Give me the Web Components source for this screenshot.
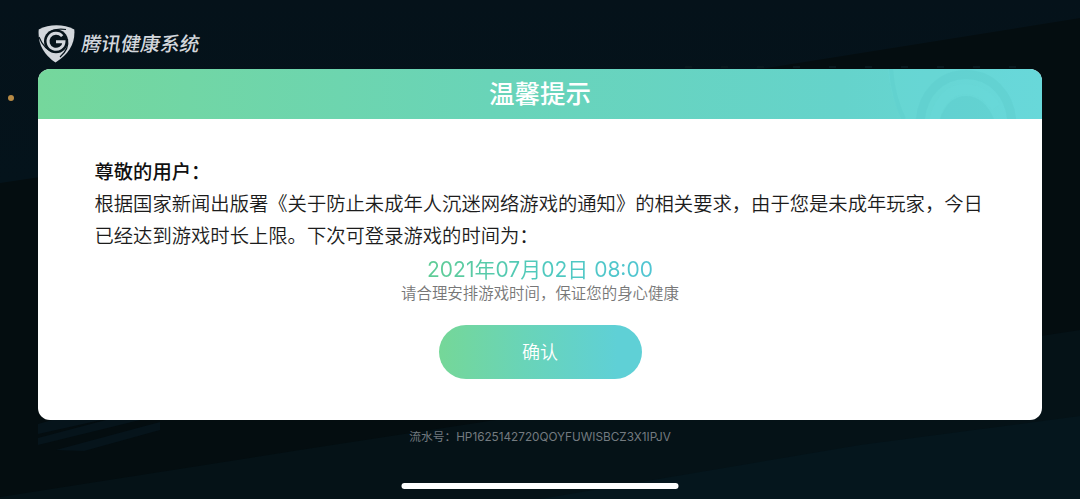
<!DOCTYPE html>
<html lang="zh-CN">
<head>
  <meta charset="UTF-8">
  <title>腾讯健康系统</title>
  <style>
    body {
      margin: 0;
      background: #040e12;
      font-family: "Inter", "Noto Sans CJK SC", sans-serif;
    }
  </style>
</head>
<body>

  <health-screen>
    <brand-logo slot="top">腾讯健康系统</brand-logo>

    <notice-card>
      <span slot="title">温馨提示</span>
      <notice-message>
        <span slot="greeting">尊敬的用户：</span>
        <span slot="line1">根据国家新闻出版署《关于防止未成年人沉迷网络游戏的通知》的相关要求，由于您是未成年玩家，今日</span>
        <span slot="line2">已经达到游戏时长上限。下次可登录游戏的时间为：</span>
      </notice-message>
      <next-login>
        <span slot="date">2021年07月02日 08:00</span>
        <span slot="tip">请合理安排游戏时间，保证您的身心健康</span>
      </next-login>
      <confirm-button>确认</confirm-button>
    </notice-card>

    <serial-number slot="bottom" code="HP1625142720QOYFUWISBCZ3X1IPJV">流水号：</serial-number>
  </health-screen>

  <script>
    // Screen: dark background with the diagonal bands
    customElements.define("health-screen", class extends HTMLElement {
      connectedCallback() {
        this.attachShadow({mode: "open"});
        this.shadowRoot.innerHTML = `
        <style>
          :host {
            display: flex;
            flex-direction: column;
            position: relative;
            box-sizing: border-box;
            width: 1080px;
            height: 499px;
            padding: 25px 38px 10px;
            overflow: hidden;
          }
          .bg {
            position: absolute;
            inset: 0;
            z-index: -1;
          }
          .dot {
            position: absolute;
            left: 8px;
            top: 95px;
            width: 6px;
            height: 6px;
            border-radius: 50%;
            background: #b78a45;
          }
          .home {
            width: 277px;
            height: 6px;
            margin: auto auto 0;
            border-radius: 3px;
            background: #fff;
            transform: translateX(-0.5px);
          }
        </style>
        <svg class="bg" width="1080" height="499" viewBox="0 0 1080 499">
          <defs>
            <linearGradient id="top" x1="0" y1="0" x2="0" y2="1">
              <stop offset="0" stop-color="#05121a"/>
              <stop offset="1" stop-color="#04131b"/>
            </linearGradient>
          </defs>
          <rect width="1080" height="499" fill="#040d10"/>
          <path d="M0 0H1080V18L760 69L0 183Z" fill="url(#top)"/>
          <path d="M0 497L300 450L1080 330V499H0Z" fill="#051217"/>
          <path d="M540 499L860 445L1080 416V499Z" fill="#05161d"/>
          <g fill="#06141b">
            <path d="M38 424L52 420H101L38 434Z"/>
            <path d="M38 438L106 420H140L38 445Z"/>
            <path d="M56 450L160 422V430L84 451Z"/>
          </g>
          <path d="M685 67H1020" stroke="#0a181d" stroke-width="2" stroke-dasharray="7 29"/>
        </svg>
        <slot name="top"></slot>
        <slot></slot>
        <slot name="bottom"></slot>
        <div class="home"></div>
        <div class="dot"></div>
        `;
      }
    });

    // Shield and system name
    customElements.define("brand-logo", class extends HTMLElement {
      connectedCallback() {
        this.attachShadow({mode: "open"});
        this.shadowRoot.innerHTML = `
        <style>
          :host {
            display: flex;
            align-items: center;
            height: 38px;
            margin-bottom: 6px;
            gap: 7px;
            color: #d3d7dc;
          }
          .name {
            font-size: 19.6px;
            font-weight: 500;
            line-height: 36px;
            transform: skewX(-10deg);
          }
        </style>
        <svg width="37" height="38" viewBox="0 0 37 38">
          <path d="M18.5 0.3Q28 0.3 36.3 4.5Q38 25 17.5 37.5Q-1 25 0.7 4.5Q9 0.3 18.5 0.3Z" fill="#d3d7dc"/>
          <circle cx="18" cy="16.3" r="12" fill="#07141b"/>
          <g fill="none" stroke="#07141b" stroke-width="1.2">
            <path d="M9 10Q15 2.5 28 4.5"/>
            <path d="M29.5 14Q31.5 24 22 32"/>
            <path d="M17 27.5Q6 25 1 12"/>
          </g>
          <path d="M24.2 11.2A8 8 0 1 0 26 16.8H18" fill="none" stroke="#d3d7dc" stroke-width="2.9"/>
        </svg>
        <span class="name"><slot></slot></span>
        `;
      }
    });

    // Card with a gradient header
    customElements.define("notice-card", class extends HTMLElement {
      connectedCallback() {
        this.attachShadow({mode: "open"});
        this.shadowRoot.innerHTML = `
        <style>
          :host {
            display: flex;
            flex-direction: column;
            height: 351px;
            border-radius: 12px;
            overflow: hidden;
            background: #fff;
          }
          header {
            position: relative;
            height: 50px;
            box-sizing: border-box;
            text-align: center;
            color: #fff;
            font-size: 25.5px;
            font-weight: 500;
            line-height: 49px;
            background: linear-gradient(90deg, #75d79c, #69d4b8 45%, #65d3cb 80%, #67d7da);
          }
          .mark {
            position: absolute;
            right: 0;
            top: 0;
          }
          .body {
            display: flex;
            flex-direction: column;
            align-items: center;
            padding: 37px 57px 0;
          }
        </style>
        <header>
          <svg class="mark" width="154" height="50" viewBox="0 0 154 50" fill="none">
            <path d="M0 0H154V50H14Q2 28 0 0Z" fill="#6adada" opacity=".3"/>
            <path d="M3 0Q5 28 16 50" stroke="#5dcccb" stroke-width="4" opacity=".4"/>
            <path d="M32 58C32 -12 124 -12 124 58" stroke="#5dcccb" stroke-width="9" opacity=".45"/>
            <path d="M46 54C52 14 88 10 108 38" stroke="#6bdbdb" stroke-width="10" opacity=".3"/>
            <path d="M52 50Q60 27 78 27T106 50Z" fill="#5dcccb" opacity=".45"/>
          </svg>
          <slot name="title"></slot>
        </header>
        <div class="body"><slot></slot></div>
        `;
      }
    });

    customElements.define("notice-message", class extends HTMLElement {
      connectedCallback() {
        this.attachShadow({mode: "open"});
        this.shadowRoot.innerHTML = `
        <style>
          :host {
            display: block;
            width: 100%;
            color: #1c1c1c;
            font-size: 19.32px;
            font-weight: 350;
            line-height: 32px;
            white-space: nowrap;
          }
          p {
            margin: 0;
            transform: translateX(-0.5px);
          }
          .greeting {
            font-weight: 500;
            color: #111;
          }
        </style>
        <p class="greeting"><slot name="greeting"></slot></p>
        <p><slot name="line1"></slot></p>
        <p><slot name="line2"></slot></p>
        `;
      }
    });

    customElements.define("next-login", class extends HTMLElement {
      connectedCallback() {
        this.attachShadow({mode: "open"});
        this.shadowRoot.innerHTML = `
        <style>
          :host {
            display: flex;
            flex-direction: column;
            align-items: center;
            margin-top: 4px;
          }
          .date {
            font-size: 21px;
            font-weight: 400;
            line-height: 28px;
            color: transparent;
            background: linear-gradient(90deg, #5fcc94, #4fc9bd 50%, #50c5d3);
            -webkit-background-clip: text;
            background-clip: text;
          }
          .tip {
            color: #777;
            font-size: 15.45px;
            font-weight: 350;
            line-height: 20px;
          }
        </style>
        <div class="date"><slot name="date"></slot></div>
        <div class="tip"><slot name="tip"></slot></div>
        `;
      }
    });

    customElements.define("confirm-button", class extends HTMLElement {
      connectedCallback() {
        this.attachShadow({mode: "open"});
        this.shadowRoot.innerHTML = `
        <style>
          :host {
            display: block;
            margin-top: 21px;
          }
          button {
            display: block;
            width: 203px;
            height: 54px;
            padding: 0 0 2px;
            border: 0;
            border-radius: 27px;
            color: #fff;
            font-family: inherit;
            font-size: 18px;
            font-weight: 350;
            background: linear-gradient(90deg, #75d798, #69d4b8 42%, #5fd0d6 88%);
          }
        </style>
        <button><slot></slot></button>
        `;
      }
    });

    customElements.define("serial-number", class extends HTMLElement {
      connectedCallback() {
        this.attachShadow({mode: "open"});
        this.shadowRoot.innerHTML = `
        <style>
          :host {
            display: block;
            margin-top: 9px;
            text-align: center;
            color: #747b80;
            font-size: 11.75px;
            line-height: 16px;
            white-space: nowrap;
          }
        </style>
        <slot></slot><span>${this.getAttribute("code")}</span>
        `;
      }
    });
  </script>
</body>
</html>
